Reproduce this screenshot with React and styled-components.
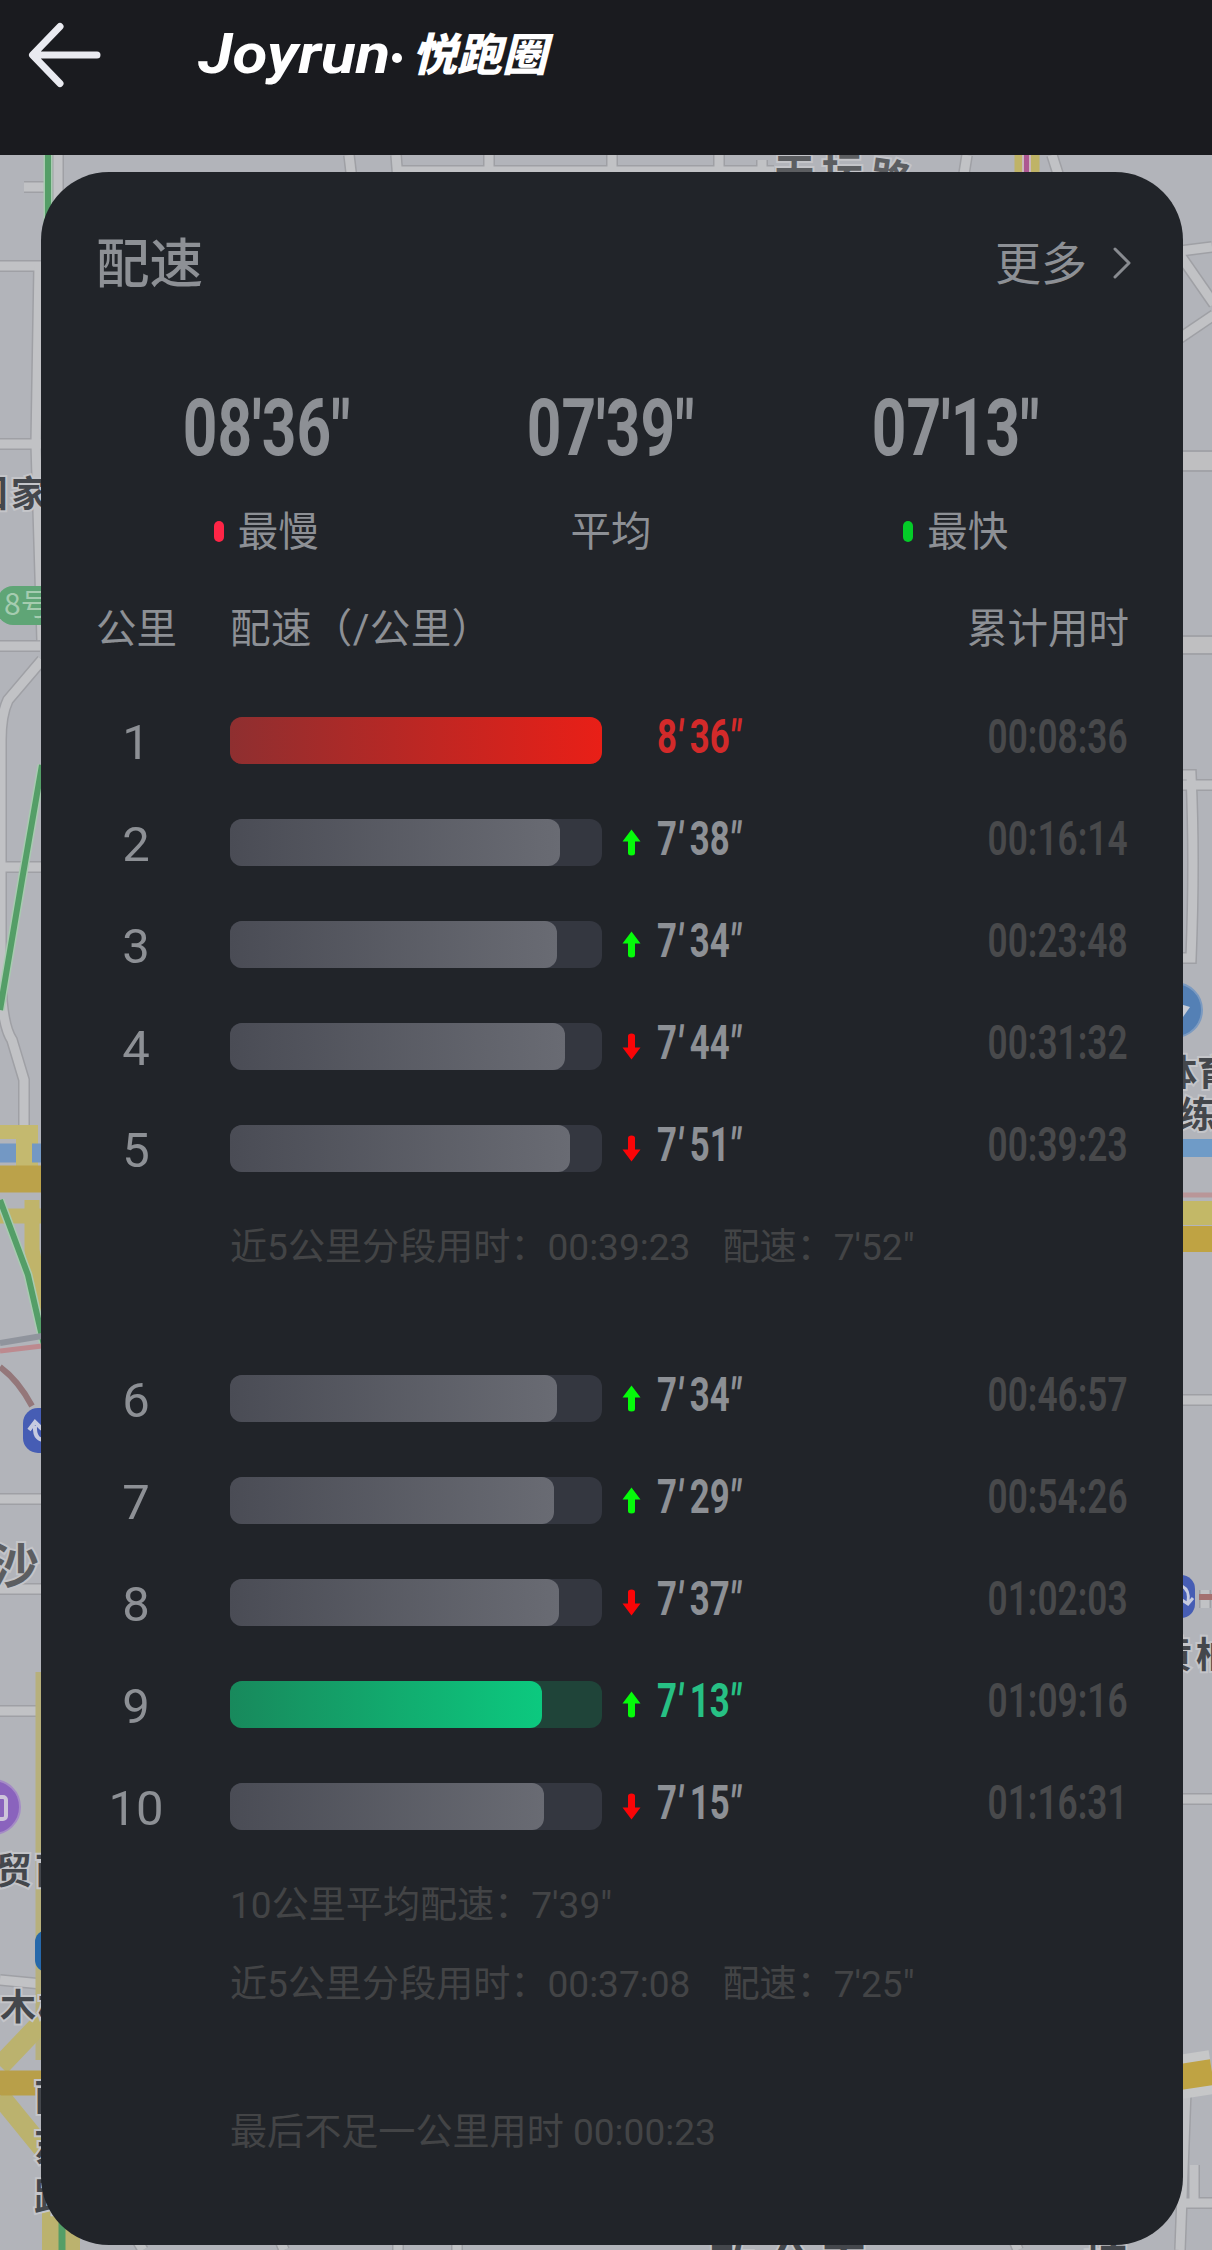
import React from 'react'
import styled, { createGlobalStyle } from 'styled-components'

const SLOWEST = 516

const firstSplits = [
    { km: 1, pace: [8, 36], total: '00:08:36', type: 'slow' },
    { km: 2, pace: [7, 38], total: '00:16:14', trend: 'up' },
    { km: 3, pace: [7, 34], total: '00:23:48', trend: 'up' },
    { km: 4, pace: [7, 44], total: '00:31:32', trend: 'down' },
    { km: 5, pace: [7, 51], total: '00:39:23', trend: 'down' },
]

const secondSplits = [
    { km: 6, pace: [7, 34], total: '00:46:57', trend: 'up' },
    { km: 7, pace: [7, 29], total: '00:54:26', trend: 'up' },
    { km: 8, pace: [7, 37], total: '01:02:03', trend: 'down' },
    { km: 9, pace: [7, 13], total: '01:09:16', trend: 'up', type: 'fast' },
    { km: 10, pace: [7, 15], total: '01:16:31', trend: 'down' },
]

const road = { fill: 'none', stroke: '#c1c2c5', strokeWidth: 9 }
const edge = { fill: 'none', stroke: '#9fa0a5', strokeWidth: 12 }

const roads = [
    'M58 155V270', 'M24 187H48', 'M0 266H42', 'M39 266L36 444L42 640', 'M0 444H42', 'M0 646H40',
    'M42 660L8 700Q1 715 1 740V980Q2 1025 12 1040L24 1080V1130', 'M0 867H42', 'M0 1499H42', 'M0 1589H42',
    'M0 1711H42', 'M0 1980L42 1984',
    'M349 155L352 180', 'M396 155L398 180', 'M489 155V180', 'M400 171H774', 'M612 155V172', 'M719 155V172',
    'M762 160V172', 'M967 155L963 180', 'M1052 155L1060 180',
    'M1180 251L1212 247', 'M1180 255L1214 304', 'M1180 338L1214 315', 'M1180 785H1212', 'M1180 775H1191Q1195 860 1191 958H1180',
    'M1180 1400H1212', 'M1205 1590V1608', 'M1180 1799H1212', 'M1186 2090L1180 2250', 'M1194 2205V2165', 'M1186 2203H1212',
    'M137 2240L143 2250', 'M280 2240L284 2250', 'M398 2240V2250', 'M457 2240V2250', 'M1014 2240L1018 2250',
]

function CityMap() {
    return (
        <MapCanvas viewBox='0 155 1212 2095'>
            <rect y='155' width='1212' height='2095' fill='#b2b4ba' />
            {roads.map((d) => <path key={'e' + d} d={d} {...edge} />)}
            {roads.map((d) => <path key={d} d={d} {...road} />)}
            <g stroke='#a2a3a8' strokeWidth='2' fill='#bfbfc1'>
                <rect x='1170' y='451' width='60' height='20' />
                <rect x='1170' y='636' width='60' height='18' />
            </g>
            {/* left edge */}
            <path d='M0 1132H31V1185' fill='none' stroke='#c4b96f' strokeWidth='14' />
            <path d='M0 1153H42' stroke='#7398c4' strokeWidth='19' />
            <path d='M24 1126V1170' stroke='#c4b96f' strokeWidth='16' />
            <path d='M0 1179H42' stroke='#bba24a' strokeWidth='27' />
            <path d='M0 1216H42M32 1200V1250L48 1330' fill='none' stroke='#c0b46a' strokeWidth='15' />
            <path d='M48 155V235M42 765L22 880L0 1010M0 1200L28 1275L44 1345' fill='none' stroke='#a8cbb0' strokeWidth='9' />
            <path d='M48 155V235M42 765L22 880L0 1010M0 1200L28 1275L44 1345' fill='none' stroke='#549e67' strokeWidth='6' />
            <path d='M0 1343L42 1336' stroke='#90949d' strokeWidth='6' />
            <path d='M0 1351L42 1346' stroke='#bd8a8f' strokeWidth='5' />
            <path d='M0 1367Q18 1380 32 1406' fill='none' stroke='#94777a' strokeWidth='6' />
            <rect x='-3' y='586' width='80' height='39' rx='16' fill='#5fa576' />
            <rect x='23' y='1408' width='44' height='45' rx='15' fill='#465db4' />
            <path d='M48 1440Q34 1442 35 1426M29 1430L35 1422L42 1429' fill='none' stroke='#c6cbe0' strokeWidth='4' />
            <path d='M39 1672V2060' stroke='#b7b07c' strokeWidth='7' />
            <circle cx='-7' cy='1807' r='27' fill='#8a63bd' stroke='#a58bc6' strokeWidth='2' />
            <rect x='-10' y='1797' width='16' height='22' rx='3' fill='none' stroke='#cdc4da' strokeWidth='4' />
            <rect x='35' y='1930' width='40' height='42' rx='12' fill='#2668aa' />
            <path d='M0 2066L42 2022M0 2096L44 2150M60 2140V2250' fill='none' stroke='#bbb26e' strokeWidth='20' />
            <path d='M0 2083H42' stroke='#b89f49' strokeWidth='25' />
            <path d='M61 2140V2250' stroke='#bbb26e' strokeWidth='38' />
            <path d='M62 2150V2250' stroke='#549e67' strokeWidth='7' />
            {/* top and right edge */}
            <path d='M1027 155V175' stroke='#bfb367' strokeWidth='25' />
            <path d='M1026.500 155V175' stroke='#cbb8bd' strokeWidth='9' />
            <path d='M1026.500 155V175' stroke='#ad5891' strokeWidth='5' />
            <circle cx='1175' cy='1010' r='27' fill='#5480b5' stroke='#7b9ac1' strokeWidth='2' />
            <path d='M1180 1004L1190 1007L1183 1017' fill='#c7ccd6' />
            <path d='M1180 1148H1212' stroke='#6f9bc7' strokeWidth='18' />
            <path d='M1180 1195H1212' stroke='#b99698' strokeWidth='5' />
            <path d='M1180 1213H1212' stroke='#c3b867' strokeWidth='24' />
            <path d='M1180 1239H1212' stroke='#bfa343' strokeWidth='26' />
            <rect x='1150' y='1575' width='45' height='43' rx='14' fill='#465db4' />
            <path d='M1182 1586Q1190 1590 1188 1602M1182 1600L1188 1604L1193 1598' fill='none' stroke='#c6cbe0' strokeWidth='3' />
            <path d='M1199 1597H1212' stroke='#a4706f' strokeWidth='6' />
            <path d='M1180 2077L1212 2072' stroke='#c6c7c8' strokeWidth='44' />
            <path d='M1180 2077L1212 2072' stroke='#bfa343' strokeWidth='26' />
            <MapText x='-28' y='507'>国</MapText>
            <MapText x='11' y='507'>家</MapText>
            <BadgeText x='4' y='615'>8号</BadgeText>
            <MapText x='-9' y='1583' $size={48} $color='#5c5e61'>沙</MapText>
            <MapText x='-4' y='1884'>贸</MapText>
            <MapText x='35' y='1884'>西</MapText>
            <MapText x='0' y='2020'>木</MapText>
            <MapText x='38' y='2020'>樨</MapText>
            <MapText x='34' y='2110' $size={38}>南</MapText>
            <MapText x='34' y='2160' $size={38}>苏</MapText>
            <MapText x='34' y='2210' $size={38}>路</MapText>
            <MapText x='774' y='188' $size={41} $color='#5c5e61'>天</MapText>
            <MapText x='822' y='186' $size={41} $color='#5c5e61'>坛</MapText>
            <MapText x='868' y='190' $size={41} $color='#5c5e61' transform='rotate(8 868 190)'>路</MapText>
            <MapText x='1161' y='1086'>体育</MapText>
            <MapText x='1180' y='1128'>练</MapText>
            <MapText x='1156' y='1668'>黄</MapText>
            <MapText x='1196' y='1668'>柏</MapText>
            <MapText x='710' y='2280' $size={44}>政</MapText>
            <MapText x='768' y='2280' $size={44}>公</MapText>
            <MapText x='822' y='2280' $size={44}>百</MapText>
            <MapText x='1084' y='2280' $size={44}>榜</MapText>
        </MapCanvas>
    )
}

function Trend({ dir }) {
    return (
        <TrendCell>
            {dir && (
                <svg width='19' height='27' viewBox='0 0 19 27'>
                    <path
                        d='M9.500 0.500L18.500 12.500H13V24Q13 26.500 9.500 26.500Q6 26.500 6 24V12.500H0.500Z'
                        fill={dir === 'up' ? '#05fb0a' : '#fb0507'}
                        transform={dir === 'up' ? undefined : 'rotate(180 9.500 13.500)'}
                    />
                </svg>
            )}
        </TrendCell>
    )
}

function Split({ km, pace, total, trend, type }) {
    const seconds = pace[0] * 60 + pace[1]
    return (
        <SplitRow>
            <Km>{km}</Km>
            <Track $type={type}>
                <Fill $type={type} style={{ width: `${(seconds / SLOWEST) * 100}%` }} />
            </Track>
            <Trend dir={trend} />
            <Pace $type={type}>{pace[0]}<Tick>'</Tick>{pace[1]}<Tick>"</Tick></Pace>
            <Total>{total}</Total>
        </SplitRow>
    )
}

function App() {
    return (
        <Page>
            <GlobalStyle />
            <Header>
                <svg width='74' height='66' viewBox='0 0 74 66'>
                    <path d='M32 4.500L4.500 33L32 61.500M5 33H69' fill='none' stroke='#e9eaf0' strokeWidth='7' strokeLinecap='round' strokeLinejoin='round' />
                </svg>
                <Brand>
                    <BrandLatin>Joyrun</BrandLatin>
                    <BrandDot />
                    <BrandHan>悦跑圈</BrandHan>
                </Brand>
            </Header>
            <Body>
                <CityMap />
                <Card>
                    <CardHead>
                        <h2>配速</h2>
                        <More>
                            更多
                            <svg width='20' height='32' viewBox='0 0 20 32'>
                                <path d='M3 2L17 16L3 30' fill='none' stroke='#888b90' strokeWidth='3' strokeLinecap='round' strokeLinejoin='round' />
                            </svg>
                        </More>
                    </CardHead>
                    <Stats>
                        <Stat>
                            <Value>08<Mark>'</Mark>36<Mark>"</Mark></Value>
                            <Label><Pill $color='#fe2546' />最慢</Label>
                        </Stat>
                        <Stat>
                            <Value>07<Mark>'</Mark>39<Mark>"</Mark></Value>
                            <Label>平均</Label>
                        </Stat>
                        <Stat>
                            <Value>07<Mark>'</Mark>13<Mark>"</Mark></Value>
                            <Label><Pill $color='#04cc28' />最快</Label>
                        </Stat>
                    </Stats>
                    <TableHead>
                        <span>公里</span>
                        <span>配速（/公里）</span>
                        <span>累计用时</span>
                    </TableHead>
                    {firstSplits.map((item) => <Split key={item.km} {...item} />)}
                    <Note>近5公里分段用时：00:39:23<span>配速：7'52"</span></Note>
                    <Gap $size={52} />
                    {secondSplits.map((item) => <Split key={item.km} {...item} />)}
                    <Note>10公里平均配速：7'39"</Note>
                    <Note $height={62}>近5公里分段用时：00:37:08<span>配速：7'25"</span></Note>
                    <Gap $size={69} />
                    <Note>最后不足一公里用时 00:00:23</Note>
                </Card>
            </Body>
        </Page>
    )
}

export default App

const GlobalStyle = createGlobalStyle`
    *{
        box-sizing:border-box;
    }
    body{
        margin:0;
        background:#b2b4ba;
        font-family:Roboto, 'Noto Sans CJK SC', sans-serif;
    }
`

const Page = styled.div`
    width:1212px;
    height:2250px;
    overflow:hidden;
`

const Header = styled.header`
    display:flex;
    align-items:flex-start;
    height:155px;
    padding:22px 0 0 28px;
    background:#1a1b1f;
`

const Brand = styled.div`
    display:flex;
    align-items:center;
    height:66px;
    margin-left:96px;
    color:#fff;
    white-space:nowrap;
`

const BrandLatin = styled.span`
    width:188px;
    margin-top:-3px;
    font:italic 700 56px/66px Roboto, sans-serif;
    transform:scaleX(1.14);
    transform-origin:left;
`

const BrandDot = styled.i`
    width:10px;
    height:10px;
    margin:6px 10px 0 6px;
    border-radius:50%;
    background:#fff;
`

const BrandHan = styled.span`
    margin-top:-6px;
    font:italic 900 45px/66px 'Noto Sans CJK SC', sans-serif;
`

const Body = styled.main`
    display:grid;
    height:2095px;
    > *{
        grid-area:1 / 1;
    }
`

const MapCanvas = styled.svg`
    width:1212px;
    height:2095px;
`

const MapText = styled.text`
    font-family:'Noto Sans CJK SC', sans-serif;
    font-weight:700;
    font-size:${({ $size = 36 }) => $size}px;
    fill:${({ $color = '#44474c' }) => $color};
    stroke:#c4c5c9;
    stroke-width:4px;
    paint-order:stroke;
`

const BadgeText = styled.text`
    font:400 30px 'Noto Sans CJK SC', sans-serif;
    fill:#a5ccb0;
`

const Card = styled.section`
    position:relative;
    width:1142px;
    height:2073px;
    margin:17px 0 0 41px;
    padding:54px 55px 0;
    border-radius:68px;
    background:#212429;
    color:#8d9095;
`

const CardHead = styled.div`
    display:flex;
    align-items:center;
    justify-content:space-between;
    height:76px;
    h2{
        margin:0;
        padding-top:2px;
        font-weight:500;
        font-size:53.5px;
        line-height:76px;
    }
`

const More = styled.div`
    display:flex;
    align-items:center;
    gap:25px;
    margin-right:-4px;
    font-size:46px;
    line-height:76px;
    svg{
        margin-top:-2px;
    }
`

const Stats = styled.div`
    display:grid;
    grid-template-columns:repeat(3, 1fr);
    width:1034px;
    margin:86px 0 0 -2px;
`

const Stat = styled.div`
    display:flex;
    flex-direction:column;
    align-items:center;
`

const Value = styled.div`
    font-size:79px;
    font-weight:700;
    line-height:80px;
    transform:scaleX(0.765);
`

const Mark = styled.span`
    display:inline-block;
    transform:translateY(3px);
`

const Label = styled.div`
    display:flex;
    align-items:center;
    height:40px;
    margin-top:44px;
    font-size:40.5px;
    line-height:40px;
`

const Pill = styled.i`
    width:10px;
    height:21px;
    margin:-2px 14px 0 0;
    border-radius:5px;
    background:${({ $color }) => $color};
`

const TableHead = styled.div`
    display:grid;
    grid-template-columns:134px 1fr auto;
    margin:57px 0 40px;
    font-size:40.5px;
    line-height:40px;
    span:nth-child(2){
        letter-spacing:0.4px;
    }
    span:last-child{
        margin-right:-1px;
    }
`

const SplitRow = styled.div`
    display:grid;
    grid-template-columns:80px 426px 55px 1fr auto;
    height:102px;
    padding-top:28px;
    font-size:49px;
    line-height:47px;
    white-space:nowrap;
`

const Km = styled.div`
    padding-top:2px;
    text-align:center;
`

const trackColor = { slow: '#4c2428', fast: '#1f4439' }
const fillColor = {
    slow: 'linear-gradient(90deg, #8e2f30, #e91f17)',
    fast: 'linear-gradient(90deg, #18895c, #0cc97f)',
}

const Track = styled.div`
    width:372px;
    height:47px;
    margin-left:54px;
    border-radius:12px;
    background:${({ $type }) => trackColor[$type] || '#343740'};
`

const Fill = styled.div`
    height:100%;
    border-radius:12px;
    background:${({ $type }) => fillColor[$type] || 'linear-gradient(90deg, #4a4c55, #696b73)'};
`

const TrendCell = styled.div`
    padding:10px 0 0 20px;
    line-height:0;
`

const paceColor = { slow: '#d32a2a', fast: '#27c084' }

const Pace = styled.div`
    height:40px;
    line-height:40px;
    font-weight:700;
    color:${({ $type }) => paceColor[$type] || '#8d9095'};
    transform:scaleX(0.71);
    transform-origin:left;
`

const Tick = styled.span`
    display:inline-block;
    margin:0 9px 0 1px;
    transform:skewX(-8deg) translateY(2px);
`

const Total = styled.div`
    height:39px;
    line-height:39px;
    text-align:right;
    font-weight:600;
    color:#48494b;
    transform:scaleX(0.72);
    transform-origin:right;
`

const Note = styled.div`
    height:${({ $height = 96 }) => $height}px;
    padding-left:134px;
    font-size:37.1px;
    line-height:${({ $height = 96 }) => $height + 2}px;
    color:#434446;
    white-space:nowrap;
    span{
        margin-left:32px;
    }
`

const Gap = styled.div`
    height:${({ $size }) => $size}px;
`
